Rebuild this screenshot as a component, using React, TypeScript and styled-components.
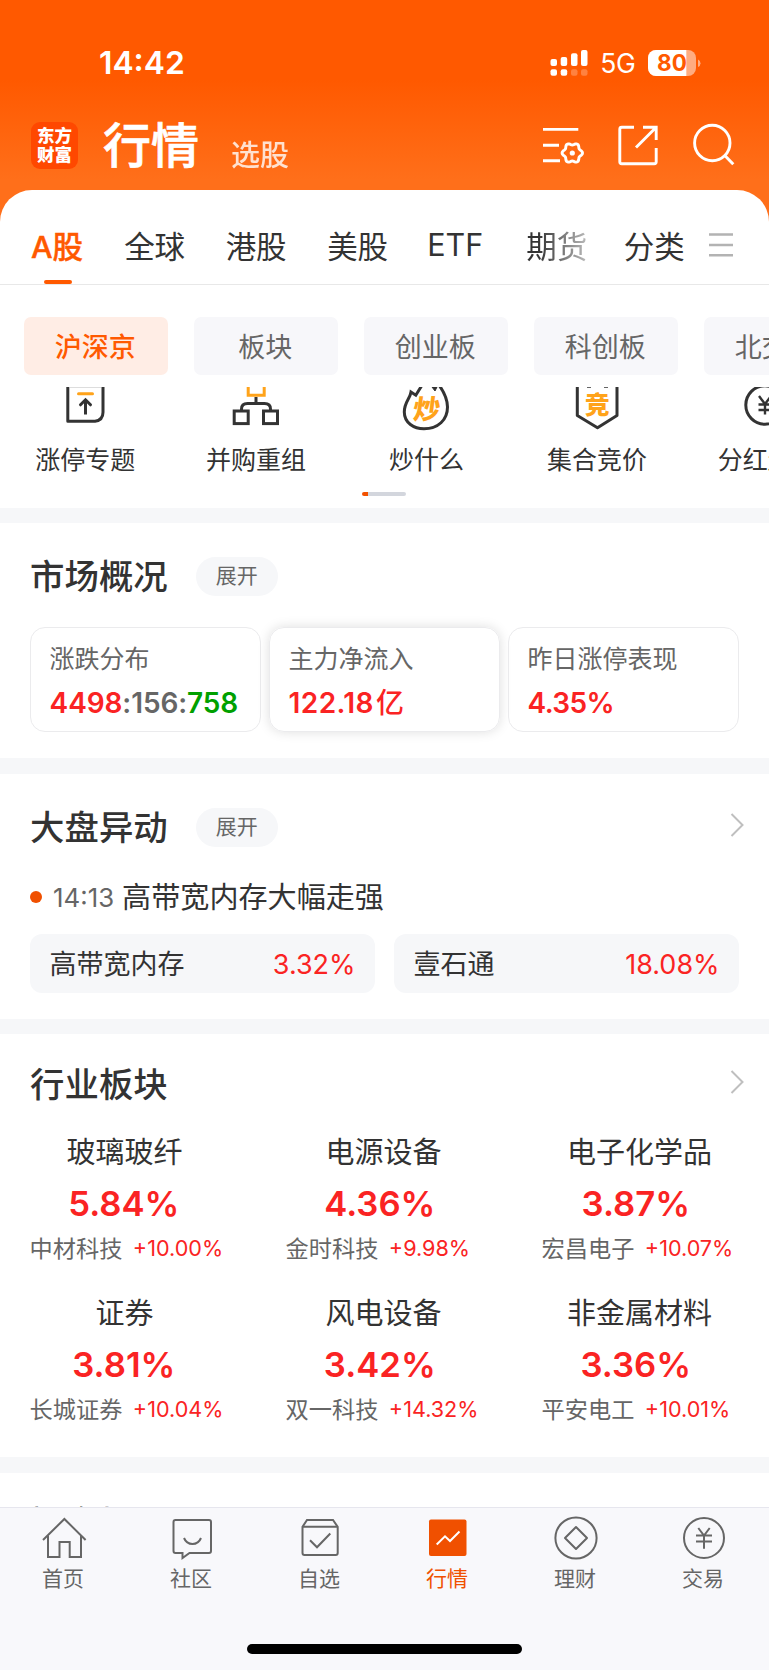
import React, { PropsWithChildren, ReactNode } from 'react';
import styled, { createGlobalStyle, css } from 'styled-components';

const GlobalStyle = createGlobalStyle`
  * {
    box-sizing: border-box;
  }
  body {
    margin: 0;
    background: #fff;
    font-family: Inter, 'Noto Sans CJK SC', sans-serif;
    color: #333;
  }
  svg {
    display: block;
    flex-shrink: 0;
  }
`;

const Page = styled.div`
  display: flex;
  flex-direction: column;
  width: 769px;
  height: 1670px;
  overflow: hidden;
  background: linear-gradient(#ff5900 0, #ff5900 80px, #ff6f1a 180px, #ff6f1a 100%);
`;

const StatusBar = styled.div`
  display: flex;
  align-items: center;
  flex-shrink: 0;
  height: 104px;
  padding: 21px 68px 0 99px;
  color: #fff;
`;

const Clock = styled.span`
  font-size: 31.8px;
  font-weight: 600;
  line-height: 40px;
  margin-right: auto;
`;

const Network = styled.span`
  font-size: 26.5px;
  line-height: 32px;
  letter-spacing: -0.3px;
  margin: 1px 12.5px 0 12px;
`;

const TitleBar = styled.div`
  display: flex;
  align-items: center;
  flex-shrink: 0;
  height: 86px;
  padding: 0 34px 4px 31px;
  color: #fff;
`;

const Logo = styled.div`
  display: flex;
  flex-direction: column;
  align-items: center;
  justify-content: center;
  width: 47px;
  height: 47px;
  border-radius: 9px;
  background: #ff4800;
  font-size: 17.5px;
  font-weight: 900;
  line-height: 19px;
`;

const PageTitle = styled.span`
  margin: 2px -1px 0 25px;
  font-size: 48px;
  font-weight: 500;
  line-height: 60px;
  -webkit-text-stroke: 0.7px #fff;
`;

const SubTitle = styled.span`
  margin: 21px auto 0 33px;
  font-size: 29px;
  font-weight: 500;
  line-height: 36px;
  opacity: 0.8;
`;

const HeaderIcons = styled.div`
  display: flex;
  gap: 31px;
`;

const Panel = styled.main`
  flex: 1;
  min-height: 0;
  overflow: hidden;
  background: #fff;
  border-radius: 32px 32px 0 0;
`;

const Tabs = styled.nav`
  display: flex;
  height: 95px;
  padding: 0 36px 0 31px;
  border-bottom: 1px solid #e8e8e8;
`;

const Tab = styled.div<{ $active?: boolean; $fade?: boolean; $gap?: number }>`
  position: relative;
  display: flex;
  align-items: center;
  padding-top: 15px;
  margin-right: ${({ $gap = 41 }) => $gap}px;
  font-size: 30.5px;
  white-space: nowrap;
  ${({ $active }) =>
    $active &&
    css`
      color: #ff5900;
      font-weight: 500;
      -webkit-text-stroke: 0.4px #ff5900;
      &::after {
        content: '';
        position: absolute;
        left: 13px;
        bottom: 0;
        width: 28px;
        height: 4px;
        border-radius: 2px;
        background: #ff5900;
      }
    `}
  ${({ $fade }) =>
    $fade &&
    css`
      background: linear-gradient(90deg, #333 20%, #bbb 100%);
      background-clip: text;
      color: transparent;
    `}
`;

const MenuIcon = styled.div`
  display: flex;
  align-items: center;
  padding-top: 16px;
`;

const Chips = styled.div`
  display: flex;
  gap: 25.6px;
  padding: 32px 0 12px 24px;
  overflow: hidden;
`;

const Chip = styled.div<{ $active?: boolean }>`
  flex: 0 0 144.4px;
  height: 58px;
  padding-right: 2px;
  border-radius: 7px;
  background: ${({ $active }) => ($active ? '#ffede5' : '#f7f7fa')};
  color: ${({ $active }) => ($active ? '#ff5900' : '#666')};
  font-weight: ${({ $active }) => ($active ? 500 : 400)};
  font-size: 27px;
  line-height: 61px;
  text-align: center;
`;

const Shortcuts = styled.div`
  display: flex;
  height: 94px;
  overflow: hidden;
`;

const Shortcut = styled.div`
  display: flex;
  flex: 0 0 170.6px;
  flex-direction: column;
  align-items: center;
  font-size: 25px;
  line-height: 46px;
`;

const Pager = styled.div`
  width: 44px;
  height: 4px;
  margin: 11px auto 12px 362px;
  border-radius: 2px;
  background: linear-gradient(90deg, #f25100 6px, #d3d6dd 6px);
`;

const Section = styled.section<{ $top: number; $bottom: number; $band?: number }>`
  border-top: ${({ $band = 15 }) => $band}px solid #f6f7f9;
  padding: ${({ $top, $bottom }) => `${$top}px 30.4px ${$bottom}px 29.6px`};
`;

const SectionHead = styled.div`
  display: flex;
  align-items: center;
  height: 48px;
  margin-right: -5px;
`;

const SectionTitle = styled.h2`
  margin: 2px 0 0 0.5px;
  font-size: 34.4px;
  font-weight: 500;
  line-height: 50px;
`;

const Expand = styled.span`
  width: 82px;
  height: 39px;
  margin-left: 28px;
  border-radius: 20px;
  background: #f6f7f9;
  color: #666;
  font-size: 21px;
  line-height: 38px;
  text-align: center;
`;

const More = styled.span`
  margin: -4px 0 0 auto;
`;

const Cards = styled.div`
  display: grid;
  grid-template-columns: repeat(3, 1fr);
  gap: 8px;
  margin-top: 27px;
`;

const Card = styled.div<{ $raised?: boolean }>`
  height: 105px;
  padding: 13px 0 0 19px;
  border: 1px solid #ebebed;
  border-radius: 15px;
  box-shadow: ${({ $raised }) => ($raised ? '0 0 12px rgba(0, 0, 0, 0.13)' : 'none')};
`;

const CardLabel = styled.div`
  color: #666;
  font-size: 25px;
  line-height: 37px;
`;

const CardValue = styled.div<{ $tracking?: number }>`
  margin-top: 5px;
  color: #fa2323;
  font-size: 28px;
  font-weight: 600;
  line-height: 40px;
  letter-spacing: ${({ $tracking = 0 }) => $tracking}px;
  white-space: nowrap;
`;

const Flat = styled.span`
  color: #666;
`;

const Down = styled.span`
  color: #00a000;
`;

const Unit = styled.span`
  margin-left: 2px;
  font-weight: 500;
  letter-spacing: 0;
`;

const News = styled.div`
  display: flex;
  align-items: center;
  margin-top: 26px;
  font-size: 29.1px;
  line-height: 42px;
`;

const Dot = styled.i`
  width: 12px;
  height: 12px;
  margin-top: -2px;
  border-radius: 50%;
  background: #f05000;
`;

const Time = styled.span`
  width: 69px;
  margin-left: 11.5px;
  color: #666;
  font-size: 25.8px;
`;

const Stocks = styled.div`
  display: grid;
  grid-template-columns: 1fr 1fr;
  gap: 19px;
  margin-top: 15px;
`;

const Stock = styled.div`
  display: flex;
  justify-content: space-between;
  height: 59px;
  padding: 0 19px 0 20px;
  border-radius: 12px;
  background: #f6f7f9;
  font-size: 27px;
  line-height: 61px;
`;

const Rise = styled.span`
  color: #fa2323;
`;

const Sectors = styled.div`
  display: grid;
  grid-template-columns: repeat(3, 256px);
  row-gap: 29.5px;
  margin: 24px -60px 0 0;
`;

const SectorCell = styled.div`
  width: 187px;
  text-align: center;
`;

const SectorName = styled.div`
  padding-left: 3px;
  font-size: 29px;
  line-height: 42px;
  white-space: nowrap;

  ${SectorCell}:not(:nth-child(3n + 1)) & {
    padding-left: 9px;
  }
`;

const SectorChange = styled.div`
  margin-top: 6.5px;
  padding-left: 1.5px;
  color: #fa2323;
  font-size: 34.7px;
  font-weight: 600;
  line-height: 44px;
`;

const Leader = styled.div`
  display: flex;
  margin-top: 9px;
  color: #666;
  font-size: 23.2px;
  line-height: 30px;
  white-space: nowrap;
`;

const LeaderChange = styled.span`
  margin: -1px 0 0 10.5px;
  color: #fa2323;
  font-size: 21.6px;
`;

const BottomBar = styled.footer`
  flex: 0 0 163px;
  border-top: 1px solid #e6e6ee;
  background: #f8f8fb;
`;

const BottomTabs = styled.div`
  display: grid;
  grid-template-columns: repeat(6, 128px);
  padding-top: 6px;
`;

const BottomTab = styled.div<{ $active?: boolean }>`
  display: flex;
  flex-direction: column;
  align-items: center;
  gap: 3px;
  color: ${({ $active }) => ($active ? '#f05000' : '#666')};
  font-size: 21px;
  line-height: 28px;
`;

const BottomLabel = styled.span`
  padding-right: 2px;
`;

const HomeIndicator = styled.div`
  width: 275px;
  height: 10px;
  margin: 51px auto 0;
  border-radius: 5px;
  background: #000;
`;

const SignalIcon = () => (
  <svg width="38" height="26" viewBox="0 0 38 26" fill="#fff">
    <rect x="0.5" y="9" width="6.5" height="7" rx="2" />
    <rect x="10.7" y="7" width="6.5" height="9" rx="2" />
    <rect x="21" y="3.3" width="6.5" height="12.7" rx="2" />
    <rect x="31" y="0" width="6.5" height="16" rx="2" />
    <rect x="0.5" y="19.3" width="6.5" height="6.5" rx="2" />
    <rect x="10.7" y="19.3" width="6.5" height="6.5" rx="2" />
    <rect x="21" y="19.3" width="6.5" height="6.5" rx="2" opacity="0.25" />
    <rect x="31" y="19.3" width="6.5" height="6.5" rx="2" opacity="0.25" />
  </svg>
);

const BatteryIcon = () => (
  <svg width="53" height="26" viewBox="0 0 53 26">
    <rect width="48" height="26" rx="8" fill="#fff" opacity="0.5" />
    <path d="M8 0H38.3V26H8a8 8 0 0 1-8-8V8a8 8 0 0 1 8-8z" fill="#fff" />
    <path d="M50 9.5q2.5 1 2.5 3.7t-2.5 3.7z" fill="#fff" opacity="0.5" />
    <text x="24" y="21.3" fontSize="22.5" fontWeight="700" textAnchor="middle" fill="#ff5900">
      80
    </text>
  </svg>
);

// six-lobed outline of the settings cog
const cogPoints = Array.from({ length: 72 }, (_, i) => {
  const a = (i * Math.PI) / 36;
  const r = 9.1 + 1.1 * Math.cos(6 * a);
  return `${(31.3 + r * Math.cos(a)).toFixed(2)},${(30 + r * Math.sin(a)).toFixed(2)}`;
}).join(' ');

const ListSettingsIcon = () => (
  <svg width="44" height="44" viewBox="0 0 44 44" fill="none" stroke="#fff" strokeWidth="2.9">
    <path d="M2 6.4H37.3M2 22.3H18M2 37.8H19" />
    <polygon points={cogPoints} />
    <circle cx="31.3" cy="30" r="2.6" fill="#fff" stroke="none" />
  </svg>
);

const ShareIcon = () => (
  <svg width="44" height="44" viewBox="0 0 44 44" fill="none" stroke="#fff" strokeWidth="2.9">
    <path d="M18 4.3H5.8a2 2 0 0 0-2 2V38.8a2 2 0 0 0 2 2H38.2a2 2 0 0 0 2-2V25" />
    <path d="M27 4.3H40.2V17M20 24.5L39.7 4.8" />
  </svg>
);

const SearchIcon = () => (
  <svg width="44" height="44" viewBox="0 0 44 44" fill="none" stroke="#fff" strokeWidth="2.9">
    <circle cx="21.3" cy="20" r="17.7" />
    <path d="M33.3 32L42.3 41.2" strokeWidth="3" />
  </svg>
);

const Chevron = () => (
  <svg width="14" height="26" viewBox="0 0 14 26" fill="none" stroke="#bfbfbf" strokeWidth="2">
    <path d="M1.5 2L12.5 13L1.5 24" />
  </svg>
);

const ShortcutSvg = ({ children }: PropsWithChildren<{}>) => (
  <svg width="60" height="50" viewBox="0 0 60 50" fill="none" stroke="#333" strokeWidth="3">
    {children}
  </svg>
);

const shortcuts: { label: string; icon: ReactNode }[] = [
  {
    label: '涨停专题',
    icon: (
      <>
        <path d="M15 0.5H46" stroke="#ddd" strokeWidth="1" />
        <path d="M12.8 -4V34.2H40q8-1 8-9V-4" strokeLinejoin="round" />
        <path d="M23.5 6.7H37.5" stroke="#ffa31a" strokeLinecap="round" />
        <path d="M30.5 27.5V13" />
        <path d="M25.5 17.8L30.5 12.8L35.5 17.8" strokeLinecap="round" />
      </>
    ),
  },
  {
    label: '并购重组',
    icon: (
      <>
        <path d="M22.2 -4V8.3H38.2V-4" stroke="#ffa31a" />
        <path d="M30 10V16.5M15.5 24V22q0-5.5 6-5.5H38.5q6 0 6 5.5V24" />
        <rect x="8.2" y="24" width="14" height="12.6" />
        <rect x="37.5" y="24" width="14" height="12.6" />
      </>
    ),
  },
  {
    label: '炒什么',
    icon: (
      <>
        <path d="M25.5 -1L19.8 8.2L15 5C14 12 8.3 15 8.3 25C8.3 36 18 41.8 28 41.8C42 41.8 51.5 33 51.5 20C51.5 12 48 5 43 -2" />
        <path d="M36 0L39 4L41 0z" fill="#333" strokeWidth="1" />
        <text
          x="30.5"
          y="32"
          fontSize="27"
          fontWeight="900"
          textAnchor="middle"
          fill="#ffa31a"
          stroke="none"
          transform="translate(3 0) skewX(-7)"
        >
          炒
        </text>
      </>
    ),
  },
  {
    label: '集合竞价',
    icon: (
      <>
        <path d="M10.3 -4V28.5L30.5 40.8L50 28.5V-4" strokeLinejoin="round" />
        <path d="M20 0H24M37 0H41" strokeWidth="1.5" />
        <text x="30.3" y="26.5" fontSize="25" fontWeight="900" textAnchor="middle" fill="#ffa31a" stroke="none">
          竞
        </text>
      </>
    ),
  },
  {
    label: '分红送转',
    icon: (
      <>
        <circle cx="27" cy="18" r="19.2" />
        <path d="M21 9L27 17L33 9M27 16V27.5M20.5 17.5H33.5M20.5 23H33.5" strokeWidth="2.4" />
      </>
    ),
  },
];

const sectors = [
  ['玻璃玻纤', '5.84%', '中材科技', '+10.00%'],
  ['电源设备', '4.36%', '金时科技', '+9.98%'],
  ['电子化学品', '3.87%', '宏昌电子', '+10.07%'],
  ['证券', '3.81%', '长城证券', '+10.04%'],
  ['风电设备', '3.42%', '双一科技', '+14.32%'],
  ['非金属材料', '3.36%', '平安电工', '+10.01%'],
];

const bottomTabs: { label: string; icon: ReactNode; active?: boolean }[] = [
  {
    label: '首页',
    icon: (
      <>
        <path d="M3 26L24.4 5L45.6 26" />
        <path d="M8 21.5V43H19.5V28H29.7V43H41V21.5" />
      </>
    ),
  },
  {
    label: '社区',
    icon: (
      <>
        <path d="M7.5 6H41a2 2 0 0 1 2 2V37a2 2 0 0 1-2 2H21.5L14.5 44V39H7.5a2 2 0 0 1-2-2V8a2 2 0 0 1 2-2z" />
        <path d="M16 24Q18.5 30 24.5 30T33 24" />
      </>
    ),
  },
  {
    label: '自选',
    icon: (
      <>
        <path d="M6.5 12.8L11 6H37L41.7 12.8V39a2 2 0 0 1-2 2H8.5a2 2 0 0 1-2-2zM6.5 12.8H41.7" />
        <path d="M14 26.3L21 33.3L34.3 19.5" />
      </>
    ),
  },
  {
    label: '行情',
    active: true,
    icon: (
      <>
        <rect x="5" y="5.5" width="37.5" height="36.5" rx="2" fill="#f05000" stroke="none" />
        <path d="M12.7 30.5L21 22.3L26 27L35.5 17.5" stroke="#fff" />
      </>
    ),
  },
  {
    label: '理财',
    icon: (
      <>
        <circle cx="24" cy="24" r="20.6" />
        <path d="M24 13L35 24L24 35L13 24z" strokeLinejoin="round" />
      </>
    ),
  },
  {
    label: '交易',
    icon: (
      <>
        <circle cx="24" cy="24" r="20" />
        <path d="M18.3 14L24 21.5L29.7 14M24 21.3V34.8M16 21.4H32M16 27.5H32" />
      </>
    ),
  },
];

const App = () => (
  <Page>
    <GlobalStyle />
    <StatusBar>
      <Clock>14:42</Clock>
      <SignalIcon />
      <Network>5G</Network>
      <BatteryIcon />
    </StatusBar>
    <TitleBar>
      <Logo>
        <span>东方</span>
        <span>财富</span>
      </Logo>
      <PageTitle>行情</PageTitle>
      <SubTitle>选股</SubTitle>
      <HeaderIcons>
        <ListSettingsIcon />
        <ShareIcon />
        <SearchIcon />
      </HeaderIcons>
    </TitleBar>
    <Panel>
      <Tabs>
        <Tab $active $gap={41}>
          A股
        </Tab>
        <Tab $gap={40.5}>全球</Tab>
        <Tab $gap={40.5}>港股</Tab>
        <Tab $gap={39}>美股</Tab>
        <Tab $gap={43}>ETF</Tab>
        <Tab $fade $gap={36.5}>
          期货
        </Tab>
        <Tab $gap={24}>分类</Tab>
        <MenuIcon>
          <svg width="24" height="26" viewBox="0 0 24 26" stroke="#b3b3b3" strokeWidth="2.6">
            <path d="M0 2.5H24M0 13H24M0 23.3H24" />
          </svg>
        </MenuIcon>
      </Tabs>
      <Chips>
        <Chip $active>沪深京</Chip>
        <Chip>板块</Chip>
        <Chip>创业板</Chip>
        <Chip>科创板</Chip>
        <Chip>北交所</Chip>
      </Chips>
      <Shortcuts>
        {shortcuts.map(({ label, icon }) => (
          <Shortcut key={label}>
            <ShortcutSvg>{icon}</ShortcutSvg>
            {label}
          </Shortcut>
        ))}
      </Shortcuts>
      <Pager />

      <Section $top={29} $bottom={26}>
        <SectionHead>
          <SectionTitle>市场概况</SectionTitle>
          <Expand>展开</Expand>
        </SectionHead>
        <Cards>
          <Card>
            <CardLabel>涨跌分布</CardLabel>
            <CardValue $tracking={-0.1}>
              4498<Flat>:156:</Flat>
              <Down>758</Down>
            </CardValue>
          </Card>
          <Card $raised>
            <CardLabel>主力净流入</CardLabel>
            <CardValue $tracking={0.4}>
              122.18<Unit>亿</Unit>
            </CardValue>
          </Card>
          <Card>
            <CardLabel>昨日涨停表现</CardLabel>
            <CardValue $tracking={-0.6}>4.35%</CardValue>
          </Card>
        </Cards>
      </Section>

      <Section $top={29} $bottom={26} $band={16}>
        <SectionHead>
          <SectionTitle>大盘异动</SectionTitle>
          <Expand>展开</Expand>
          <More>
            <Chevron />
          </More>
        </SectionHead>
        <News>
          <Dot />
          <Time>14:13</Time>
          高带宽内存大幅走强
        </News>
        <Stocks>
          <Stock>
            高带宽内存
            <Rise>3.32%</Rise>
          </Stock>
          <Stock>
            壹石通
            <Rise>18.08%</Rise>
          </Stock>
        </Stocks>
      </Section>

      <Section $top={26} $bottom={32.5}>
        <SectionHead>
          <SectionTitle>行业板块</SectionTitle>
          <More>
            <Chevron />
          </More>
        </SectionHead>
        <Sectors>
          {sectors.map(([name, change, leader, leaderChange]) => (
            <SectorCell key={name}>
              <SectorName>{name}</SectorName>
              <SectorChange>{change}</SectorChange>
              <Leader>
                {leader}
                <LeaderChange>{leaderChange}</LeaderChange>
              </Leader>
            </SectorCell>
          ))}
        </Sectors>
      </Section>

      <Section $top={24} $bottom={0} $band={16}>
        <SectionTitle>概念板块</SectionTitle>
      </Section>
    </Panel>
    <BottomBar>
      <BottomTabs>
        {bottomTabs.map(({ label, icon, active }) => (
          <BottomTab key={label} $active={active}>
            <svg width="48" height="48" viewBox="0 0 48 48" fill="none" stroke="#666" strokeWidth="2">
              {icon}
            </svg>
            <BottomLabel>{label}</BottomLabel>
          </BottomTab>
        ))}
      </BottomTabs>
      <HomeIndicator />
    </BottomBar>
  </Page>
);

export default App;
